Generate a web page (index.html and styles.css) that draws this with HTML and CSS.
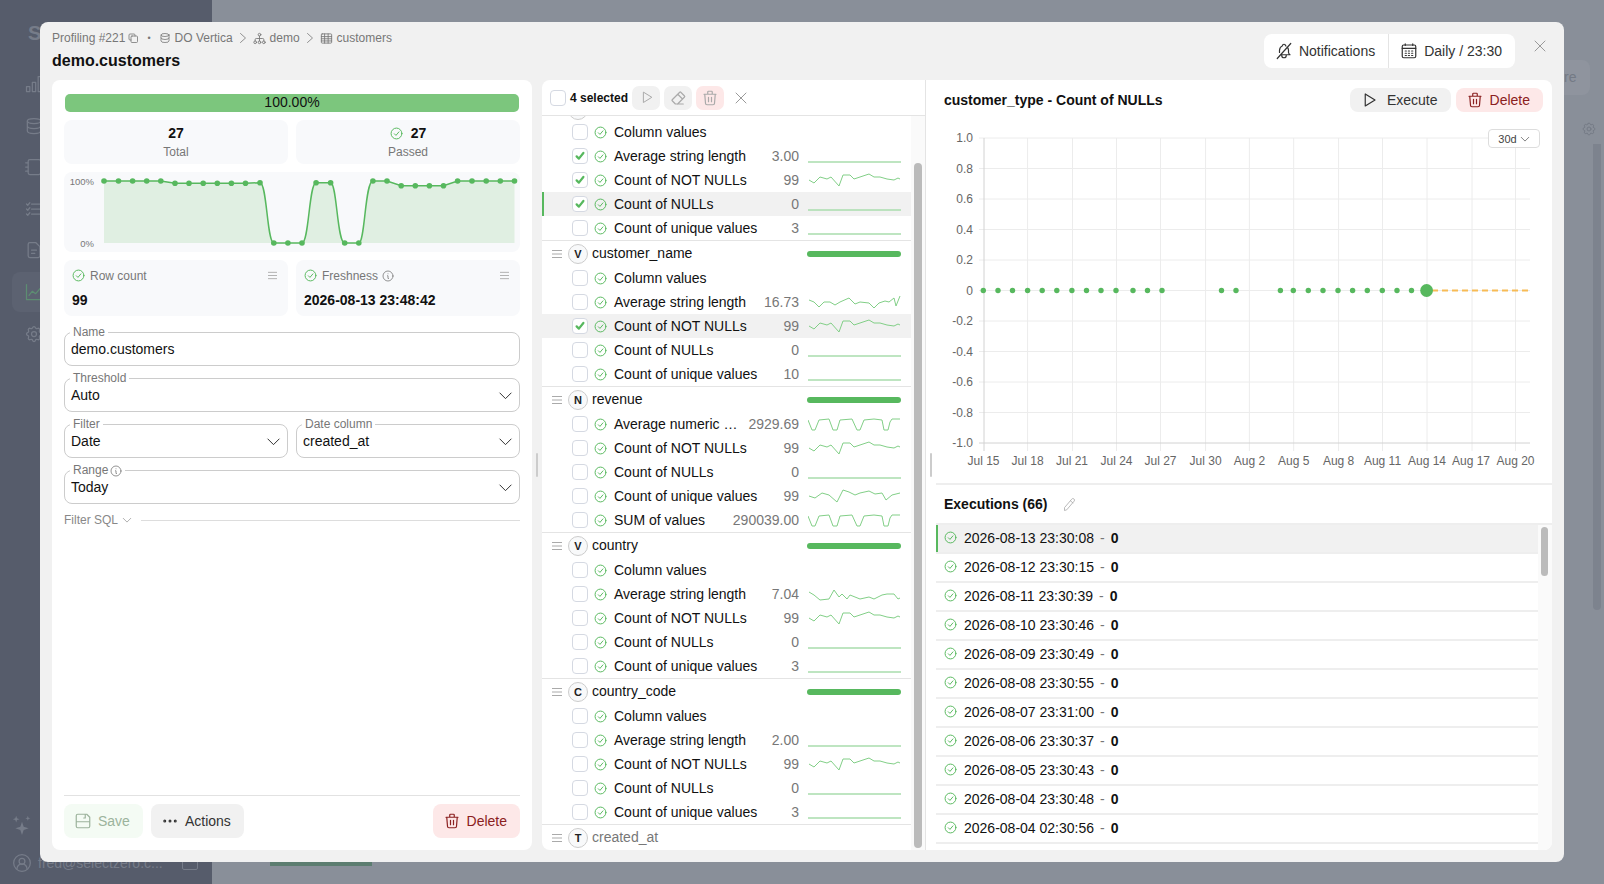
FILE: index.html
```html
<!DOCTYPE html>
<html lang="en">
<head>
  <meta charset="UTF-8">
  <title>demo.customers</title>
  <link rel="stylesheet" href="styles.css">
</head>
<body>

  <svg class="defs" width="0" height="0">
    <symbol id="i-check" viewBox="0 0 24 24"><circle cx="12" cy="12" r="10"/><path d="M8 12.5l3 3l5.5 -6.5"/></symbol>
    <symbol id="i-tick" viewBox="0 0 16 16"><path d="M3.5 8.5l3 3l6 -7.5"/></symbol>
    <symbol id="i-menu" viewBox="0 0 10 10"><path d="M0 1.5h10M0 5h10M0 8.5h10"/></symbol>
    <symbol id="i-trash" viewBox="0 0 24 24"><path d="M4 7h16M10 11v6M14 11v6M5 7l1 12a2 2 0 0 0 2 2h8a2 2 0 0 0 2 -2l1 -12M9 7v-3a1 1 0 0 1 1 -1h4a1 1 0 0 1 1 1v3"/></symbol>
    <symbol id="i-copy" viewBox="0 0 24 24"><rect x="8" y="8" width="13" height="13" rx="2"/><path d="M16 8v-2a2 2 0 0 0 -2 -2h-8a2 2 0 0 0 -2 2v8a2 2 0 0 0 2 2h2"/></symbol>
    <symbol id="i-db" viewBox="0 0 24 24"><ellipse cx="12" cy="6" rx="8" ry="3"/><path d="M4 6v12a8 3 0 0 0 16 0v-12M4 12a8 3 0 0 0 16 0"/></symbol>
    <symbol id="i-tree" viewBox="0 0 24 24"><circle cx="12" cy="5" r="2.5"/><circle cx="4" cy="19" r="2.5"/><circle cx="12" cy="19" r="2.5"/><circle cx="20" cy="19" r="2.5"/><path d="M12 7.5v9M4 16.5v-2.500a2 2 0 0 1 2 -2h12a2 2 0 0 1 2 2v2.5"/></symbol>
    <symbol id="i-table" viewBox="0 0 24 24"><rect x="2.5" y="3.5" width="19" height="17" rx="1.5"/><path d="M2.5 8.5h19M2.5 12.5h19M2.5 16.5h19M8.500 3.5v17M15 3.5v17"/></symbol>
    <symbol id="i-right" viewBox="0 0 24 24"><path d="M7 3l10 9l-10 9"/></symbol>
    <symbol id="i-down" viewBox="0 0 24 24"><path d="M3 8l9 9l9 -9"/></symbol>
    <symbol id="i-info" viewBox="0 0 24 24"><circle cx="12" cy="12" r="10"/><path d="M12 7.5h.01M11 11.5h1v5.5h1"/></symbol>
    <symbol id="i-bell" viewBox="0 0 24 24"><g transform="matrix(-1 0 0 1 24 0)"><path d="M9.346 5.353c.21 -.129 .428 -.246 .654 -.353a2 2 0 1 1 4 0a7 7 0 0 1 4 6v3m-1 3h-13a4 4 0 0 0 2 -3v-3a6.996 6.996 0 0 1 1.273 -3.707M9 17v1a3 3 0 0 0 6 0v-1M3 2l18 20"/></g></symbol>
    <symbol id="i-cal" viewBox="0 0 24 24"><rect x="3" y="4" width="18" height="17" rx="2"/><path d="M3 8.5h18M7 2.5v2M17 2.5v2M7 12h1.500M11.200 12h1.500M15.500 12h1.500M7 15h1.500M11.200 15h1.500M15.500 15h1.500M7 18h1.500M11.200 18h1.500M15.500 18h1.500"/></symbol>
    <symbol id="i-play" viewBox="0 0 24 24"><path d="M7 4v16l13 -8z"/></symbol>
    <symbol id="i-eraser" viewBox="0 0 24 24"><path d="M19 20h-10.500l-4.210 -4.300a1 1 0 0 1 0 -1.410l10 -10a1 1 0 0 1 1.410 0l5 5a1 1 0 0 1 0 1.410l-9.200 9.300M18 13.300l-6.300 -6.300"/></symbol>
    <symbol id="i-x" viewBox="0 0 24 24"><path d="M22 2L2 22M2 2l20 20"/></symbol>
    <symbol id="i-pencil" viewBox="0 0 24 24"><path d="M4 21v-4l11.500 -13.500a2.400 2.400 0 0 1 4 3l-11.500 13.500zM13.500 6l4 3.500"/></symbol>
    <symbol id="i-save" viewBox="0 0 24 24"><path d="M5 3h12l4 4v12a2 2 0 0 1 -2 2h-14a2 2 0 0 1 -2 -2v-14a2 2 0 0 1 2 -2zM3 13h18M15 3v5h-2"/></symbol>
    <symbol id="i-gear" viewBox="0 0 24 24"><path d="M10.325 4.317c.426 -1.756 2.924 -1.756 3.350 0a1.724 1.724 0 0 0 2.573 1.066c1.543 -.94 3.310 .826 2.370 2.370a1.724 1.724 0 0 0 1.065 2.572c1.756 .426 1.756 2.924 0 3.350a1.724 1.724 0 0 0 -1.066 2.573c.94 1.543 -.826 3.310 -2.370 2.370a1.724 1.724 0 0 0 -2.572 1.065c-.426 1.756 -2.924 1.756 -3.350 0a1.724 1.724 0 0 0 -2.573 -1.066c-1.543 .94 -3.310 -.826 -2.370 -2.370a1.724 1.724 0 0 0 -1.065 -2.572c-1.756 -.426 -1.756 -2.924 0 -3.350a1.724 1.724 0 0 0 1.066 -2.573c-.94 -1.543 .826 -3.310 2.370 -2.370c1 .608 2.296 .07 2.572 -1.065"/><circle cx="12" cy="12" r="3"/></symbol>

    <symbol id="s-flat" viewBox="0 0 93 20"><path class="flat" d="M0 16H93"/></symbol>
    <symbol id="s-nn" viewBox="0 0 93 20"><polyline points="1,10 6,13 12,7 19,9 23,7 31,16 35,5 42,5 46,9 52,7 61,4 66,7 72,7 79,9 86,10 90,8 92,9"/></symbol>
    <symbol id="s-str16" viewBox="0 0 93 20"><polyline points="1,8 6,10 11,15 16,10 22,10 27,13 32,10 41,6 47,12 52,10 61,11 66,16 71,11 77,9 81,10 86,6 88,14 92,4"/></symbol>
    <symbol id="s-str7" viewBox="0 0 93 20"><polyline points="1,8 6,11 12,16 21,15 26,6 31,13 34,10 39,15 42,11 52,15 61,13 66,15 74,11 79,10 86,10 90,15 92,14"/></symbol>
    <symbol id="s-uniq" viewBox="0 0 93 20"><polyline points="1,10 7,12 14,7 21,9 29,16 35,4 41,6 47,9 52,7 61,5 67,8 74,7 78,14 84,9 92,7"/></symbol>
    <symbol id="s-num" viewBox="0 0 93 20"><polyline points="0,6 4,16 7,16 11,6 21,5 25,16 29,16 32,6 44,5 49,16 52,16 56,6 66,5"/><polyline class="bad" points="66,5 74,6 76,16 80,16 82,8"/><polyline points="82,8 84,5 92,5"/></symbol>
  </svg>

  <!-- Page behind the dialog -->
  <div class="page">
    <aside class="sidebar">
      <div class="sidebar__logo">S</div>
      <nav class="sidebar__nav">
        <svg class="nav-icon" viewBox="0 0 24 24"><path d="M3 15h4v6h-4zM10 10h4v11h-4zM17 3h4v18h-4z"/></svg>
        <svg class="nav-icon"><use href="#i-db"/></svg>
        <svg class="nav-icon" viewBox="0 0 24 24"><rect x="5" y="3" width="15" height="18" rx="2"/><path d="M2 7h3M2 12h3M2 17h3"/></svg>
        <svg class="nav-icon" viewBox="0 0 24 24"><path d="M9 6h12M9 12h12M9 18h12M3 6l1.500 1.500l2.500 -3M3 12l1.500 1.500l2.500 -3M3 18l1.500 1.500l2.500 -3"/></svg>
        <svg class="nav-icon" viewBox="0 0 24 24"><path d="M14 3h-7a2 2 0 0 0 -2 2v14a2 2 0 0 0 2 2h10a2 2 0 0 0 2 -2v-11zM9 12h6M9 16h4"/></svg>
        <div class="sidebar__active"><svg class="nav-icon nav-icon--green" viewBox="0 0 24 24"><path d="M3 3v18h18M6 16l4 -5l4 3l6 -7"/></svg></div>
        <svg class="nav-icon"><use href="#i-gear"/></svg>
      </nav>
      <div class="sidebar__assist"><svg class="nav-icon nav-icon--fill" viewBox="0 0 24 24"><path d="M12 8l2 6l6 2l-6 2l-2 6l-2 -6l-6 -2l6 -2zM5 1l1 3l3 1l-3 1l-1 3l-1 -3l-3 -1l3 -1zM19 1l.8 2.200l2.200 .8l-2.200 .8l-.8 2.200l-.8 -2.200l-2.200 -.8l2.200 -.8z"/></svg></div>
      <div class="sidebar__user">
        <svg class="nav-icon" viewBox="0 0 24 24"><circle cx="12" cy="12" r="10"/><circle cx="12" cy="10" r="3.5"/><path d="M6 19a6 6 0 0 1 12 0"/></svg>
        <span>fred@selectzero.c...</span>
        <i class="sidebar__box"></i>
      </div>
    </aside>
    <main class="backdrop">
      <div class="backdrop__bar"></div>
      <div class="backdrop__side">
        <div class="backdrop__pill">re</div>
        <svg class="nav-icon backdrop__gear"><use href="#i-gear"/></svg>
        <div class="backdrop__scroll"></div>
      </div>
    </main>
  </div>

  <!-- Dialog -->
  <div class="modal">
    <header class="modal__head">
      <div class="modal__titles">
        <div class="crumbs">
          <span>Profiling #221</span>
          <svg class="ico ico--12 crumbs__copy"><use href="#i-copy"/></svg>
          <span class="crumbs__dot">•</span>
          <svg class="ico ico--12"><use href="#i-db"/></svg>
          <span>DO Vertica</span>
          <svg class="ico ico--12"><use href="#i-right"/></svg>
          <svg class="ico ico--13"><use href="#i-tree"/></svg>
          <span>demo</span>
          <svg class="ico ico--12"><use href="#i-right"/></svg>
          <svg class="ico ico--13"><use href="#i-table"/></svg>
          <span>customers</span>
        </div>
        <h1 class="modal__title">demo.customers</h1>
      </div>
      <div class="schedule">
        <div class="schedule__item"><svg class="ico ico--18"><use href="#i-bell"/></svg>Notifications</div>
        <div class="schedule__item"><svg class="ico ico--18"><use href="#i-cal"/></svg>Daily / 23:30</div>
      </div>
      <svg class="ico modal__close"><use href="#i-x"/></svg>
    </header>

    <div class="modal__body">
      <!-- Left: table summary and form -->
      <section class="summary">
        <div class="score">100.00%</div>
        <div class="pair">
          <div class="stat"><b>27</b><span>Total</span></div>
          <div class="stat"><b><svg class="ok ok--title"><use href="#i-check"/></svg>27</b><span>Passed</span></div>
        </div>
        <div class="trend">
          <svg class="trend__svg" viewBox="-1 0 456 80">
            <path class="trend__area" d="M39 71V9H95.800L110 11.300H180.500L195 10.700C202 10.700 202 71 208.800 71H237C244 71 244 10.700 251.100 10.700H265.600C272 10.700 272 71 279.700 71H293.800C300 71 300 9 307.900 9H322L336.200 13.700H378.500L392.600 9H449.500V71Z"/>
            <path class="trend__line" d="M39 9H95.800L110 11.300H180.500L195 10.700C202 10.700 202 71 208.800 71H237C244 71 244 10.700 251.100 10.700H265.600C272 10.700 272 71 279.700 71H293.800C300 71 300 9 307.900 9H322L336.200 13.700H378.500L392.600 9H449.500"/>
            <g class="trend__dots">
              <circle cx="39" cy="9" r="2.800"/><circle cx="53.500" cy="9" r="2.800"/><circle cx="67.600" cy="9" r="2.800"/><circle cx="81.700" cy="9" r="2.800"/><circle cx="95.800" cy="9" r="2.800"/><circle cx="110" cy="11.300" r="2.800"/><circle cx="124" cy="11.300" r="2.800"/><circle cx="138.200" cy="11.300" r="2.800"/><circle cx="152.300" cy="11.300" r="2.800"/><circle cx="166.400" cy="11.300" r="2.800"/><circle cx="180.500" cy="11.300" r="2.800"/><circle cx="195" cy="10.700" r="2.800"/><circle cx="208.800" cy="71" r="2.800"/><circle cx="222.900" cy="71" r="2.800"/><circle cx="237" cy="71" r="2.800"/><circle cx="251.100" cy="10.700" r="2.800"/><circle cx="265.600" cy="10.700" r="2.800"/><circle cx="279.700" cy="71" r="2.800"/><circle cx="293.800" cy="71" r="2.800"/><circle cx="307.900" cy="9" r="2.800"/><circle cx="322" cy="9" r="2.800"/><circle cx="336.200" cy="13.700" r="2.800"/><circle cx="350.300" cy="13.700" r="2.800"/><circle cx="364.400" cy="13.700" r="2.800"/><circle cx="378.500" cy="13.700" r="2.800"/><circle cx="392.600" cy="9" r="2.800"/><circle cx="407" cy="9" r="2.800"/><circle cx="421.200" cy="9" r="2.800"/><circle cx="435.300" cy="9" r="2.800"/><circle cx="449.500" cy="9" r="2.800"/>
            </g>
            <text class="trend__label" x="29" y="13">100%</text>
            <text class="trend__label" x="29" y="75">0%</text>
          </svg>
        </div>
        <div class="pair">
          <div class="metric">
            <div class="metric__name"><svg class="ok"><use href="#i-check"/></svg>Row count<svg class="ico metric__menu"><use href="#i-menu"/></svg></div>
            <b>99</b>
          </div>
          <div class="metric">
            <div class="metric__name"><svg class="ok"><use href="#i-check"/></svg>Freshness<svg class="ico ico--12 metric__info"><use href="#i-info"/></svg><svg class="ico metric__menu"><use href="#i-menu"/></svg></div>
            <b>2026-08-13 23:48:42</b>
          </div>
        </div>

        <div class="form">
          <div class="field"><label class="field__label">Name</label>demo.customers</div>
          <div class="field"><label class="field__label">Threshold</label>Auto<svg class="ico field__arrow"><use href="#i-down"/></svg></div>
          <div class="pair">
            <div class="field"><label class="field__label">Filter</label>Date<svg class="ico field__arrow"><use href="#i-down"/></svg></div>
            <div class="field"><label class="field__label">Date column</label>created_at<svg class="ico field__arrow"><use href="#i-down"/></svg></div>
          </div>
          <div class="field"><label class="field__label">Range <svg class="ico ico--12"><use href="#i-info"/></svg></label>Today<svg class="ico field__arrow"><use href="#i-down"/></svg></div>
        </div>
        <div class="filter-sql">Filter SQL<svg class="ico ico--10"><use href="#i-down"/></svg><i></i></div>

        <footer class="summary__foot">
          <button class="btn btn--save"><svg class="ico ico--18"><use href="#i-save"/></svg>Save</button>
          <button class="btn btn--grey"><svg class="ico ico--18" viewBox="0 0 24 24"><circle cx="5" cy="12" r="1.2"/><circle cx="12" cy="12" r="1.2"/><circle cx="19" cy="12" r="1.2"/></svg>Actions</button>
          <button class="btn btn--red btn--end"><svg class="ico ico--18"><use href="#i-trash"/></svg>Delete</button>
        </footer>
      </section>

      <div class="splitter"><i></i></div>

      <div class="workspace">
        <!-- Middle: tests by column -->
        <section class="tests">
          <div class="tests__bar">
            <span class="box"></span>
            <b class="tests__count">4 selected</b>
            <span class="tool"><svg class="ico ico--15"><use href="#i-play"/></svg></span>
            <span class="tool"><svg class="ico ico--18"><use href="#i-eraser"/></svg></span>
            <span class="tool tool--red"><svg class="ico ico--18"><use href="#i-trash"/></svg></span>
            <svg class="ico tests__clear"><use href="#i-x"/></svg>
          </div>
          <div class="tests__body">
            <div class="tests__list">
              <div class="group group--first">
                <div class="group__cut"><span class="badge"></span></div>
                <div class="row"><span class="box"></span><svg class="ok"><use href="#i-check"/></svg><span class="row__name">Column values</span></div>
                <div class="row"><span class="box"><svg class="tick"><use href="#i-tick"/></svg></span><svg class="ok"><use href="#i-check"/></svg><span class="row__name">Average string length</span><span class="row__val">3.00</span><svg class="spark"><use href="#s-flat"/></svg></div>
                <div class="row"><span class="box"><svg class="tick"><use href="#i-tick"/></svg></span><svg class="ok"><use href="#i-check"/></svg><span class="row__name">Count of NOT NULLs</span><span class="row__val">99</span><svg class="spark"><use href="#s-nn"/></svg></div>
                <div class="row row--active"><span class="box"><svg class="tick"><use href="#i-tick"/></svg></span><svg class="ok"><use href="#i-check"/></svg><span class="row__name">Count of NULLs</span><span class="row__val">0</span><svg class="spark"><use href="#s-flat"/></svg></div>
                <div class="row"><span class="box"></span><svg class="ok"><use href="#i-check"/></svg><span class="row__name">Count of unique values</span><span class="row__val">3</span><svg class="spark"><use href="#s-flat"/></svg></div>
              </div>

              <div class="group">
                <div class="group__head"><svg class="ico group__menu"><use href="#i-menu"/></svg><span class="badge">V</span><span class="group__name">customer_name</span><i class="group__bar"></i></div>
                <div class="row"><span class="box"></span><svg class="ok"><use href="#i-check"/></svg><span class="row__name">Column values</span></div>
                <div class="row"><span class="box"></span><svg class="ok"><use href="#i-check"/></svg><span class="row__name">Average string length</span><span class="row__val">16.73</span><svg class="spark"><use href="#s-str16"/></svg></div>
                <div class="row row--hover"><span class="box"><svg class="tick"><use href="#i-tick"/></svg></span><svg class="ok"><use href="#i-check"/></svg><span class="row__name">Count of NOT NULLs</span><span class="row__val">99</span><svg class="spark"><use href="#s-nn"/></svg></div>
                <div class="row"><span class="box"></span><svg class="ok"><use href="#i-check"/></svg><span class="row__name">Count of NULLs</span><span class="row__val">0</span><svg class="spark"><use href="#s-flat"/></svg></div>
                <div class="row"><span class="box"></span><svg class="ok"><use href="#i-check"/></svg><span class="row__name">Count of unique values</span><span class="row__val">10</span><svg class="spark"><use href="#s-flat"/></svg></div>
              </div>

              <div class="group">
                <div class="group__head"><svg class="ico group__menu"><use href="#i-menu"/></svg><span class="badge">N</span><span class="group__name">revenue</span><i class="group__bar"></i></div>
                <div class="row"><span class="box"></span><svg class="ok"><use href="#i-check"/></svg><span class="row__name">Average numeric …</span><span class="row__val">2929.69</span><svg class="spark"><use href="#s-num"/></svg></div>
                <div class="row"><span class="box"></span><svg class="ok"><use href="#i-check"/></svg><span class="row__name">Count of NOT NULLs</span><span class="row__val">99</span><svg class="spark"><use href="#s-nn"/></svg></div>
                <div class="row"><span class="box"></span><svg class="ok"><use href="#i-check"/></svg><span class="row__name">Count of NULLs</span><span class="row__val">0</span><svg class="spark"><use href="#s-flat"/></svg></div>
                <div class="row"><span class="box"></span><svg class="ok"><use href="#i-check"/></svg><span class="row__name">Count of unique values</span><span class="row__val">99</span><svg class="spark"><use href="#s-uniq"/></svg></div>
                <div class="row"><span class="box"></span><svg class="ok"><use href="#i-check"/></svg><span class="row__name">SUM of values</span><span class="row__val">290039.00</span><svg class="spark"><use href="#s-num"/></svg></div>
              </div>

              <div class="group">
                <div class="group__head"><svg class="ico group__menu"><use href="#i-menu"/></svg><span class="badge">V</span><span class="group__name">country</span><i class="group__bar"></i></div>
                <div class="row"><span class="box"></span><svg class="ok"><use href="#i-check"/></svg><span class="row__name">Column values</span></div>
                <div class="row"><span class="box"></span><svg class="ok"><use href="#i-check"/></svg><span class="row__name">Average string length</span><span class="row__val">7.04</span><svg class="spark"><use href="#s-str7"/></svg></div>
                <div class="row"><span class="box"></span><svg class="ok"><use href="#i-check"/></svg><span class="row__name">Count of NOT NULLs</span><span class="row__val">99</span><svg class="spark"><use href="#s-nn"/></svg></div>
                <div class="row"><span class="box"></span><svg class="ok"><use href="#i-check"/></svg><span class="row__name">Count of NULLs</span><span class="row__val">0</span><svg class="spark"><use href="#s-flat"/></svg></div>
                <div class="row"><span class="box"></span><svg class="ok"><use href="#i-check"/></svg><span class="row__name">Count of unique values</span><span class="row__val">3</span><svg class="spark"><use href="#s-flat"/></svg></div>
              </div>

              <div class="group">
                <div class="group__head"><svg class="ico group__menu"><use href="#i-menu"/></svg><span class="badge">C</span><span class="group__name">country_code</span><i class="group__bar"></i></div>
                <div class="row"><span class="box"></span><svg class="ok"><use href="#i-check"/></svg><span class="row__name">Column values</span></div>
                <div class="row"><span class="box"></span><svg class="ok"><use href="#i-check"/></svg><span class="row__name">Average string length</span><span class="row__val">2.00</span><svg class="spark"><use href="#s-flat"/></svg></div>
                <div class="row"><span class="box"></span><svg class="ok"><use href="#i-check"/></svg><span class="row__name">Count of NOT NULLs</span><span class="row__val">99</span><svg class="spark"><use href="#s-nn"/></svg></div>
                <div class="row"><span class="box"></span><svg class="ok"><use href="#i-check"/></svg><span class="row__name">Count of NULLs</span><span class="row__val">0</span><svg class="spark"><use href="#s-flat"/></svg></div>
                <div class="row"><span class="box"></span><svg class="ok"><use href="#i-check"/></svg><span class="row__name">Count of unique values</span><span class="row__val">3</span><svg class="spark"><use href="#s-flat"/></svg></div>
              </div>

              <div class="group group--off">
                <div class="group__head"><svg class="ico group__menu"><use href="#i-menu"/></svg><span class="badge">T</span><span class="group__name">created_at</span></div>
              </div>
            </div>
            <div class="tests__track"><i></i></div>
          </div>
        </section>

        <!-- Right: selected test detail -->
        <section class="detail">
          <div class="splitter"><i></i></div>
          <div class="detail__main">
            <div class="detail__head">
              <h2 class="detail__title">customer_type - Count of NULLs</h2>
              <button class="btn btn--small btn--run btn--grey"><svg class="ico ico--18"><use href="#i-play"/></svg>Execute</button>
              <button class="btn btn--small btn--red"><svg class="ico ico--18"><use href="#i-trash"/></svg>Delete</button>
            </div>

            <div class="plot">
              <svg class="plot__svg" viewBox="936 120 616 365">
                <g class="plot__grid">
                  <path d="M979 138H1530M979 168.500H1530M979 199H1530M979 229.500H1530M979 260H1530M979 290.500H1530M979 321H1530M979 351.500H1530M979 382H1530M979 412.500H1530"/>
                  <path d="M1027.600 138V451M1072.500 138V451M1116.500 138V451M1160.500 138V451M1205.600 138V451M1249.400 138V451M1293.700 138V451M1338.600 138V451M1382.500 138V451M1427 138V451M1472 138V451M1515.500 138V451"/>
                </g>
                <path class="plot__axis" d="M984 138V451M979 443H1530"/>
                <g class="plot__labels plot__labels--y">
                  <text x="973" y="142">1.0</text><text x="973" y="172.500">0.8</text><text x="973" y="203">0.6</text><text x="973" y="233.500">0.4</text><text x="973" y="264">0.2</text><text x="973" y="294.500">0</text><text x="973" y="325">-0.2</text><text x="973" y="355.500">-0.4</text><text x="973" y="386">-0.6</text><text x="973" y="416.500">-0.8</text><text x="973" y="447">-1.0</text>
                </g>
                <g class="plot__labels plot__labels--x">
                  <text x="983.500" y="465">Jul 15</text><text x="1027.600" y="465">Jul 18</text><text x="1072" y="465">Jul 21</text><text x="1116.500" y="465">Jul 24</text><text x="1160.500" y="465">Jul 27</text><text x="1205.600" y="465">Jul 30</text><text x="1249.400" y="465">Aug 2</text><text x="1293.700" y="465">Aug 5</text><text x="1338.600" y="465">Aug 8</text><text x="1382.500" y="465">Aug 11</text><text x="1427" y="465">Aug 14</text><text x="1471" y="465">Aug 17</text><text x="1515.500" y="465">Aug 20</text>
                </g>
                <path class="plot__plan" d="M1432 290.500H1530"/>
                <g class="plot__dots">
                  <circle cx="983.300" cy="290.500" r="2.700"/><circle cx="998" cy="290.500" r="2.700"/><circle cx="1012.500" cy="290.500" r="2.700"/><circle cx="1027.600" cy="290.500" r="2.700"/><circle cx="1042.200" cy="290.500" r="2.700"/><circle cx="1056.800" cy="290.500" r="2.700"/><circle cx="1071.900" cy="290.500" r="2.700"/><circle cx="1086.500" cy="290.500" r="2.700"/><circle cx="1101" cy="290.500" r="2.700"/><circle cx="1116" cy="290.500" r="2.700"/><circle cx="1133" cy="290.500" r="2.700"/><circle cx="1147.500" cy="290.500" r="2.700"/><circle cx="1162" cy="290.500" r="2.700"/><circle cx="1221.500" cy="290.500" r="2.700"/><circle cx="1236" cy="290.500" r="2.700"/><circle cx="1280.400" cy="290.500" r="2.700"/><circle cx="1293.300" cy="290.500" r="2.700"/><circle cx="1308.300" cy="290.500" r="2.700"/><circle cx="1323" cy="290.500" r="2.700"/><circle cx="1338" cy="290.500" r="2.700"/><circle cx="1352.600" cy="290.500" r="2.700"/><circle cx="1367.300" cy="290.500" r="2.700"/><circle cx="1382.300" cy="290.500" r="2.700"/><circle cx="1397" cy="290.500" r="2.700"/><circle cx="1411.500" cy="290.500" r="2.700"/><circle cx="1426.600" cy="290.500" r="6.400"/>
                </g>
              </svg>
              <div class="plot__range">30d<svg class="ico ico--10"><use href="#i-down"/></svg></div>
            </div>

            <div class="runs__head"><b>Executions (66)</b><svg class="ico ico--15"><use href="#i-pencil"/></svg></div>
            <div class="runs">
              <div class="runs__list">
                <div class="run run--active"><svg class="ok"><use href="#i-check"/></svg>2026-08-13 23:30:08<span class="run__sep">-</span><b>0</b></div>
                <div class="run"><svg class="ok"><use href="#i-check"/></svg>2026-08-12 23:30:15<span class="run__sep">-</span><b>0</b></div>
                <div class="run"><svg class="ok"><use href="#i-check"/></svg>2026-08-11 23:30:39<span class="run__sep">-</span><b>0</b></div>
                <div class="run"><svg class="ok"><use href="#i-check"/></svg>2026-08-10 23:30:46<span class="run__sep">-</span><b>0</b></div>
                <div class="run"><svg class="ok"><use href="#i-check"/></svg>2026-08-09 23:30:49<span class="run__sep">-</span><b>0</b></div>
                <div class="run"><svg class="ok"><use href="#i-check"/></svg>2026-08-08 23:30:55<span class="run__sep">-</span><b>0</b></div>
                <div class="run"><svg class="ok"><use href="#i-check"/></svg>2026-08-07 23:31:00<span class="run__sep">-</span><b>0</b></div>
                <div class="run"><svg class="ok"><use href="#i-check"/></svg>2026-08-06 23:30:37<span class="run__sep">-</span><b>0</b></div>
                <div class="run"><svg class="ok"><use href="#i-check"/></svg>2026-08-05 23:30:43<span class="run__sep">-</span><b>0</b></div>
                <div class="run"><svg class="ok"><use href="#i-check"/></svg>2026-08-04 23:30:48<span class="run__sep">-</span><b>0</b></div>
                <div class="run"><svg class="ok"><use href="#i-check"/></svg>2026-08-04 02:30:56<span class="run__sep">-</span><b>0</b></div>
              </div>
              <div class="runs__track"><i></i></div>
            </div>
          </div>
        </section>
      </div>
    </div>
  </div>

</body>
</html>
```

FILE: styles.css
```css
* {
  box-sizing: border-box;
}

html, body {
  height: 100%;
}

body {
  margin: 0;
  height: 884px;
  overflow: hidden;
  font-family: "Liberation Sans", Arial, sans-serif;
  font-size: 14px;
  color: #111;
  background: #898f99;
}

h1, h2 {
  margin: 0;
}

.defs {
  position: absolute;
}

/* Icons */
.ico, .ok, .tick, .spark {
  flex: none;
  fill: none;
  stroke: currentColor;
  stroke-width: 1.6;
  stroke-linecap: round;
  stroke-linejoin: round;
}

.ico {
  width: 15px;
  height: 15px;
}

.ico--10 { width: 10px; height: 10px; }
.ico--12 { width: 12px; height: 12px; }
.ico--13 { width: 13px; height: 13px; }
.ico--15 { width: 15px; height: 15px; }
.ico--18 { width: 18px; height: 18px; }

.ok {
  width: 13px;
  height: 13px;
  color: #57b85e;
  stroke-width: 1.8;
}

.ok--title {
  margin-right: 8px;
  vertical-align: -2px;
}

/* Page behind the dialog */
.page {
  display: flex;
  height: 884px;
}

.sidebar {
  width: 212px;
  flex: none;
  display: flex;
  flex-direction: column;
  background: #565c6b;
  color: #767c89;
  padding: 22px 0 0 12px;
}

.sidebar__logo {
  font-size: 20px;
  font-weight: bold;
  padding-left: 16px;
  height: 28px;
}

.sidebar__nav {
  display: flex;
  flex-direction: column;
  gap: 21.6px;
  margin-top: 24px;
  padding-left: 12px;
}

.nav-icon {
  width: 20px;
  height: 20px;
  flex: none;
  fill: none;
  stroke: currentColor;
  stroke-width: 1.5;
  stroke-linecap: round;
  stroke-linejoin: round;
}

.nav-icon--green {
  color: #5d8d72;
}

.nav-icon--fill {
  fill: currentColor;
  stroke: none;
}

.sidebar__active {
  margin: -10px 0 -10px -12px;
  padding: 10px 12px;
  height: 40px;
  background: #5c6271;
  border-radius: 8px;
}

.sidebar__assist {
  margin-top: auto;
  padding-left: 0;
  height: 20px;
}

.sidebar__user {
  display: flex;
  align-items: center;
  gap: 6px;
  height: 20px;
  margin: 18px 0 11px 0;
  font-size: 14px;
}

.sidebar__box {
  width: 16px;
  height: 14px;
  margin-left: 13px;
  border: 1px solid #767c89;
  border-radius: 2px;
}

.backdrop {
  flex: 1;
  display: flex;
  justify-content: space-between;
}

.backdrop__bar {
  align-self: flex-end;
  width: 102px;
  height: 4px;
  margin: 0 0 18px 58px;
  background: #5c7d70;
}

.backdrop__side {
  width: 40px;
  padding-top: 60px;
  color: #747a85;
}

.backdrop__pill {
  width: 26px;
  height: 35px;
  line-height: 35px;
  font-size: 14px;
  text-align: right;
  padding-right: 15px;
  background: #8f949e;
  border-radius: 0 8px 8px 0;
}

.backdrop__gear {
  display: block;
  width: 16px;
  height: 16px;
  margin: 26px 0 0 17px;
}

.backdrop__scroll {
  width: 8px;
  height: 466px;
  margin: 7px 0 0 29px;
  background: #7d838e;
  border-radius: 0 0 4px 4px;
}

/* Dialog */
.modal {
  position: absolute;
  left: 40px;
  top: 22px;
  width: 1524px;
  height: 840px;
  padding: 0 12px 12px;
  background: #f1f1f1;
  border-radius: 8px;
  display: flex;
  flex-direction: column;
}

.modal__head {
  height: 58px;
  flex: none;
  display: flex;
  align-items: flex-start;
}

.modal__titles {
  flex: 1;
  padding-top: 9px;
}

.crumbs {
  display: flex;
  align-items: center;
  gap: 4px;
  height: 14px;
  font-size: 12px;
  color: #777;
}

.crumbs__copy {
  margin-left: -2px;
}

.crumbs__dot {
  margin: 0 4px;
  font-size: 9px;
}

.modal__title {
  margin-top: 6px;
  font-size: 16px;
  line-height: 20px;
}

.schedule {
  display: flex;
  margin-top: 12px;
  height: 34px;
  background: #fff;
  border-radius: 8px;
  color: #333;
}

.schedule__item {
  display: flex;
  align-items: center;
  gap: 6px;
  padding: 0 13px 0 11px;
}

.schedule__item + .schedule__item {
  border-left: 1px solid #e4e4e4;
}

.modal__close {
  width: 12px;
  height: 12px;
  margin: 18px 6px 0 19px;
  color: #999;
  stroke-width: 2;
}

.modal__body {
  flex: 1;
  min-height: 0;
  display: flex;
}

.splitter {
  width: 10px;
  flex: none;
  display: flex;
  align-items: center;
  justify-content: center;
}

.splitter i {
  width: 2px;
  height: 24px;
  background: #ccc;
  border-radius: 1px;
}

/* Left panel */
.summary {
  width: 480px;
  flex: none;
  display: flex;
  flex-direction: column;
  gap: 8px;
  padding: 14px 12px 12px;
  background: #fff;
  border-radius: 8px;
}

.score {
  height: 18px;
  line-height: 17px;
  margin: 0 1px;
  text-align: center;
  background: #7cc67d;
  border-radius: 5px;
}

.pair {
  display: grid;
  grid-template-columns: 224px 224px;
  gap: 8px;
}

.stat, .trend, .metric {
  background: #f8f9fb;
  border-radius: 8px;
}

.stat {
  height: 44px;
  display: flex;
  flex-direction: column;
  align-items: center;
  padding-top: 5px;
}

.stat b {
  line-height: 16px;
}

.stat span {
  margin-top: 4px;
  font-size: 12px;
  line-height: 15px;
  color: #777;
}

.trend {
  height: 80px;
}

.trend__svg {
  display: block;
  width: 456px;
  height: 80px;
}

.trend__area {
  fill: #e0efe2;
}

.trend__line {
  fill: none;
  stroke: #57b85e;
  stroke-width: 1.5;
}

.trend__dots {
  fill: #57b85e;
}

.trend__label {
  font-size: 9.5px;
  fill: #777;
  text-anchor: end;
}

.metric {
  height: 56px;
  padding: 8px 8px 0;
}

.metric__name {
  display: flex;
  align-items: center;
  gap: 5px;
  height: 15px;
  font-size: 12px;
  color: #777;
}

.metric__info {
  margin-left: -1px;
}

.metric__menu {
  width: 9px;
  height: 9px;
  margin-left: auto;
  margin-right: 3px;
  color: #aaa;
  stroke-width: 1;
}

.metric b {
  display: block;
  margin-top: 9px;
  line-height: 16px;
}

.form {
  display: flex;
  flex-direction: column;
  gap: 12px;
  margin-top: 8px;
}

.field {
  position: relative;
  height: 34px;
  display: flex;
  align-items: center;
  justify-content: space-between;
  padding: 0 6px;
  border: 1px solid #ccc;
  border-radius: 8px;
}

.field__label {
  position: absolute;
  left: 5px;
  top: -7px;
  display: flex;
  align-items: center;
  gap: 2px;
  padding: 0 3px;
  font-size: 12px;
  line-height: 13px;
  color: #777;
  background: #fff;
}

.field__arrow {
  color: #333;
  stroke-width: 1.6;
}

.filter-sql {
  display: flex;
  align-items: center;
  gap: 4px;
  height: 16px;
  font-size: 12px;
  color: #888;
}

.filter-sql i {
  flex: 1;
  height: 1px;
  margin-left: 5px;
  background: #ddd;
}

.summary__foot {
  margin-top: auto;
  display: flex;
  gap: 8px;
  padding-top: 8px;
  border-top: 1px solid #e2e2e2;
}

.btn {
  display: flex;
  align-items: center;
  gap: 6px;
  height: 34px;
  padding: 0 13px 0 10px;
  border: 0;
  border-radius: 8px;
  font: inherit;
}

.btn--save {
  background: #f4fbf4;
  color: #9cb39c;
}

.btn--grey {
  background: #f1f1f1;
  color: #333;
}

.btn--red {
  background: #fde8e8;
  color: #8b2020;
}

.btn--end {
  margin-left: auto;
}

.btn--small {
  height: 24px;
}

.btn--run {
  gap: 9px;
}

/* Middle panel */
.workspace {
  flex: 1;
  min-width: 0;
  display: flex;
  background: #fff;
  border-radius: 8px;
  overflow: hidden;
}

.tests {
  width: 384px;
  flex: none;
  display: flex;
  flex-direction: column;
  border-right: 1px solid #e4e4e4;
}

.tests__bar {
  height: 36px;
  flex: none;
  display: flex;
  align-items: center;
  gap: 4px;
  padding-left: 8px;
  border-bottom: 1px solid #e4e4e4;
}

.tests__count {
  font-size: 12px;
}

.tool {
  width: 28px;
  height: 24px;
  display: flex;
  align-items: center;
  justify-content: center;
  background: #f1f1f1;
  border-radius: 7px;
  color: #aaa;
}

.tool--red {
  background: #fde8e8;
}

.tests__clear {
  width: 12px;
  height: 12px;
  margin-left: 7px;
  color: #999;
  stroke-width: 2;
}

.tests__body {
  flex: 1;
  min-height: 0;
  display: flex;
}

.tests__list {
  width: 369px;
  flex: none;
  overflow: hidden;
}

.tests__track, .runs__track {
  flex: 1;
  background: #fafafa;
}

.tests__track i {
  display: block;
  width: 8px;
  height: 685px;
  margin: 47px 0 0 3px;
  background: #bbb;
  border-radius: 4px;
}

.group {
  border-top: 1px solid #e4e4e4;
}

.group--first {
  border-top: 0;
}

.group--off {
  color: #777;
}

.group__cut {
  height: 4px;
  overflow: hidden;
  padding-left: 26px;
}

.group__cut .badge {
  margin: -16px 0 0;
}

.group__head {
  height: 25px;
  display: flex;
  align-items: center;
  padding: 0 10px 0 10px;
}

.group__menu {
  width: 10px;
  height: 10px;
  color: #aaa;
  stroke-width: 1;
}

.badge {
  width: 20px;
  height: 20px;
  flex: none;
  display: flex;
  align-items: center;
  justify-content: center;
  margin-left: 6px;
  background: #f8f9fa;
  border: 1px solid #ccc;
  border-radius: 50%;
  font-size: 11px;
  font-weight: bold;
  color: #222;
}

.group__name {
  flex: 1;
  margin-left: 4px;
  padding-bottom: 1px;
}

.group__bar {
  width: 94px;
  height: 6px;
  background: #57b85e;
  border-radius: 3px;
}

.row {
  height: 24px;
  display: flex;
  align-items: center;
  padding: 0 10px 0 30px;
}

.row--active {
  background: #f1f1f1;
  box-shadow: inset 2px 0 0 #57b85e;
}

.row--hover {
  background: #f1f1f1;
}

.box {
  width: 16px;
  height: 16px;
  flex: none;
  display: flex;
  align-items: center;
  justify-content: center;
  background: #fff;
  border: 1px solid #d5d9e2;
  border-radius: 4px;
}

.tick {
  width: 12px;
  height: 12px;
  color: #57b85e;
  stroke-width: 3;
}

.row .ok {
  margin-left: 6px;
}

.row__name {
  margin-left: 7px;
  padding-bottom: 1px;
  white-space: nowrap;
}

.row__val {
  margin-left: auto;
  padding-bottom: 1px;
  width: 80px;
  text-align: right;
  color: #777;
}

.spark {
  width: 93px;
  height: 20px;
  margin-left: 9px;
  color: #82cf87;
  stroke-width: 1;
  stroke-linecap: butt;
}

.spark .bad {
  stroke: #f07f7f;
}

.flat {
  stroke: #a9dcad;
  stroke-width: 1.4;
}

/* Right panel */
.detail {
  flex: 1;
  min-width: 0;
  display: flex;
}

.detail__main {
  flex: 1;
  min-width: 0;
  display: flex;
  flex-direction: column;
}

.detail__head {
  height: 40px;
  flex: none;
  display: flex;
  align-items: flex-start;
  gap: 5px;
  padding: 8px 9px 0 8px;
}

.detail__title {
  flex: 1;
  font-size: 14px;
  line-height: 24px;
}

.plot {
  position: relative;
  height: 365px;
  flex: none;
  border-bottom: 2px solid #eee;
}

.plot__svg {
  display: block;
  width: 616px;
  height: 365px;
}

.plot__grid {
  fill: none;
  stroke: #ececec;
  stroke-width: 1;
}

.plot__axis {
  fill: none;
  stroke: #d2d2d2;
  stroke-width: 1;
}

.plot__labels {
  font-size: 12px;
  fill: #666;
}

.plot__labels--y {
  text-anchor: end;
}

.plot__labels--x {
  text-anchor: middle;
}

.plot__plan {
  fill: none;
  stroke: #f7bb55;
  stroke-width: 2;
  stroke-dasharray: 6 4;
}

.plot__dots {
  fill: #57b85e;
}

.plot__range {
  position: absolute;
  top: 9px;
  right: 12px;
  width: 52px;
  height: 19px;
  display: flex;
  align-items: center;
  justify-content: center;
  gap: 3px;
  font-size: 11px;
  color: #444;
  background: #fff;
  border: 1px solid #ddd;
  border-radius: 4px;
}

.runs__head {
  height: 38px;
  flex: none;
  display: flex;
  align-items: center;
  gap: 15px;
  padding-left: 8px;
}

.runs__head .ico {
  color: #aaa;
  stroke-width: 1.3;
}

.runs {
  flex: 1;
  min-height: 0;
  display: flex;
  overflow: hidden;
  border-top: 2px solid #eee;
}

.runs__list {
  width: 602px;
  flex: none;
}

.run {
  height: 29px;
  display: flex;
  align-items: center;
  padding: 0 0 2px 8px;
  border-bottom: 2px solid #eee;
}

.run .ok {
  margin-right: 7px;
}

.run--active {
  background: #f1f1f1;
  box-shadow: inset 2px 0 0 #57b85e;
}

.run__sep {
  margin: 0 6px;
  color: #777;
}

.runs__track i {
  display: block;
  width: 7px;
  height: 49px;
  margin: 2px 0 0 3px;
  background: #bbb;
  border-radius: 4px;
}
```
